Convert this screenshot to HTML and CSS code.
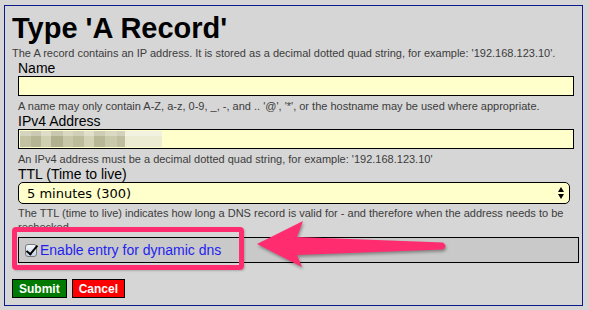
FILE: index.html
```html
<!DOCTYPE html>
<html lang="en">
<head>
  <meta charset="UTF-8">
  <meta name="viewport" content="width=device-width, initial-scale=1.0">
  <title>Type 'A Record'</title>
  <link rel="stylesheet" href="styles.css">
</head>
<body>
  <div class="record">
    <h1>Type 'A Record'</h1>
    <p class="intro">The A record contains an IP address. It is stored as a decimal dotted quad string, for example: '192.168.123.10'.</p>

    <div class="fields">
      <!-- Name -->
      <label class="field-label" for="name">Name</label>
      <input type="text" id="name" class="text-input">
      <p class="help">A name may only contain A-Z, a-z, 0-9, _, -, and .. '@', '*', or the hostname may be used where appropriate.</p>

      <!-- IPv4 -->
      <label class="field-label" for="ipv4">IPv4 Address</label>
      <div class="ip-field">
        <input type="text" id="ipv4" class="text-input">
        <span class="redacted" aria-hidden="true"></span>
      </div>
      <p class="help">An IPv4 address must be a decimal dotted quad string, for example: '192.168.123.10'</p>

      <!-- TTL -->
      <label class="field-label" for="ttl">TTL (Time to live)</label>
      <div class="select-wrap">
        <select id="ttl" class="ttl-select">
          <option>5 minutes (300)</option>
          <option>1 hour (3600)</option>
          <option>1 day (86400)</option>
        </select>
      </div>
      <p class="help">The TTL (time to live) indicates how long a DNS record is valid for - and therefore when the address needs to be rechecked</p>

      <div class="dyn">
        <input type="checkbox" id="dyn" checked>
        <label for="dyn">Enable entry for dynamic dns</label>
      </div>
    </div>

    <div class="buttons">
      <button type="submit" class="btn submit">Submit</button>
      <button type="button" class="btn cancel">Cancel</button>
    </div>
  </div>

  <!-- anotacao por cima da pagina -->
  <div class="callout"></div>
  <svg class="arrow" width="589" height="310" viewBox="0 0 589 310">
    <path d="M257,244 L303,221 L297,237 L443,242.5 Q448,246 443,249.5 L297,255 L302,267 Z" fill="#ff2d6f"/>
  </svg>
</body>
</html>
```

FILE: styles.css
```css
* {
  margin: 0;
  padding: 0;
  box-sizing: border-box;
}

body {
  position: relative;
  padding: 5px 6px 4px 4px;
  background-color: #d6d6d6;
  font-family: "Liberation Sans", Arial, sans-serif;
  color: #000;
}

.record {
  border: 1px solid #0d1a8c;
  padding: 5px 8px 7px 7px;
}

h1 {
  font-size: 29px;
  font-weight: 700;
  line-height: 34px;
}

.intro {
  margin-top: 1px;
  font-size: 11px;
  line-height: 14px;
  color: #3c3c3c;
}

.fields {
  margin-left: 6px;
}

.field-label {
  display: block;
  font-size: 14px;
  line-height: 16px;
}

.text-input {
  display: block;
  width: 100%;
  height: 20px;
  border: 1px solid #000;
  background-color: #ffffcc;
  font-family: "Liberation Sans", Arial, sans-serif;
  font-size: 13px;
  padding: 0 3px;
  outline: none;
}

.ip-field {
  position: relative;
}

.redacted {
  position: absolute;
  left: 2px;
  top: 2px;
  width: 142px;
  height: 16px;
  background-image:
    linear-gradient(180deg, rgba(255, 255, 255, 0.3) 0 30%, rgba(0, 0, 0, 0) 30% 100%),
    linear-gradient(90deg, #c3c3a3 0 8%, #b5b593 8% 15%, #cfcfb2 15% 22%, #b0b08e 22% 30%, #c8c8a9 30% 37%, #bcbc9b 37% 45%, #d2d2b5 45% 52%, #b8b897 52% 60%, #c9c9ab 60% 68%, #bfbf9f 68% 74%, #ececd2 74% 100%);
}

.help {
  margin-top: 3px;
  font-size: 11px;
  line-height: 14px;
  color: #3c3c3c;
}

.select-wrap {
  position: relative;
  width: 552px;
}

.ttl-select {
  display: block;
  width: 100%;
  height: 22px;
  border: 1px solid #000;
  border-radius: 5px;
  background-color: #ffffcc;
  font-family: "DejaVu Sans", Verdana, sans-serif;
  font-size: 13px;
  color: #000;
  padding: 0 20px 0 8px;
  appearance: none;
  -webkit-appearance: none;
  outline: none;
}

.select-wrap::before,
.select-wrap::after {
  content: "";
  position: absolute;
  right: 6px;
  border-left: 3.5px solid transparent;
  border-right: 3.5px solid transparent;
}

.select-wrap::before {
  top: 5px;
  border-bottom: 5px solid #000;
}

.select-wrap::after {
  bottom: 5px;
  border-top: 5px solid #000;
}

.select-wrap + .help {
  margin-top: 2px;
}

.dyn {
  display: flex;
  align-items: center;
  gap: 3px;
  height: 26px;
  margin-top: 3px;
  margin-right: -5px;
  padding: 0 6px;
  border: 1px solid #000;
  background-color: #c9c9c9;
}

.dyn input {
  appearance: none;
  -webkit-appearance: none;
  position: relative;
  width: 12px;
  height: 13px;
  border: 1px solid #7a7a7a;
  border-radius: 3px;
  background: linear-gradient(#f6f9fd, #c5d3e6);
}

.dyn input:checked::after {
  content: "";
  position: absolute;
  left: 3px;
  top: -2px;
  width: 4px;
  height: 10px;
  border-right: 2.5px solid #000;
  border-bottom: 2.5px solid #000;
  transform: rotate(40deg);
}

.dyn label {
  font-size: 14px;
  line-height: 16px;
  color: #1f1ff0;
}

.buttons {
  display: flex;
  gap: 5px;
  margin-top: 16px;
}

.btn {
  height: 19px;
  padding: 0 6px;
  border: 1px solid #000;
  font-family: "Liberation Sans", Arial, sans-serif;
  font-size: 12px;
  font-weight: 700;
  color: #fff;
  cursor: pointer;
}

.submit {
  background-color: #007a00;
}

.cancel {
  background-color: #ff0000;
}

/* moldura rosa e seta */
.callout {
  position: absolute;
  left: 12px;
  top: 227px;
  width: 232px;
  height: 43px;
  border: 5px solid #ff2d6f;
  border-radius: 4px;
  box-shadow: 1px 1px 2px rgba(0, 0, 0, 0.2);
  pointer-events: none;
}

.arrow {
  position: absolute;
  left: 0;
  top: 0;
  pointer-events: none;
  filter: drop-shadow(1px 2px 1.5px rgba(0, 0, 0, 0.35));
}
```
